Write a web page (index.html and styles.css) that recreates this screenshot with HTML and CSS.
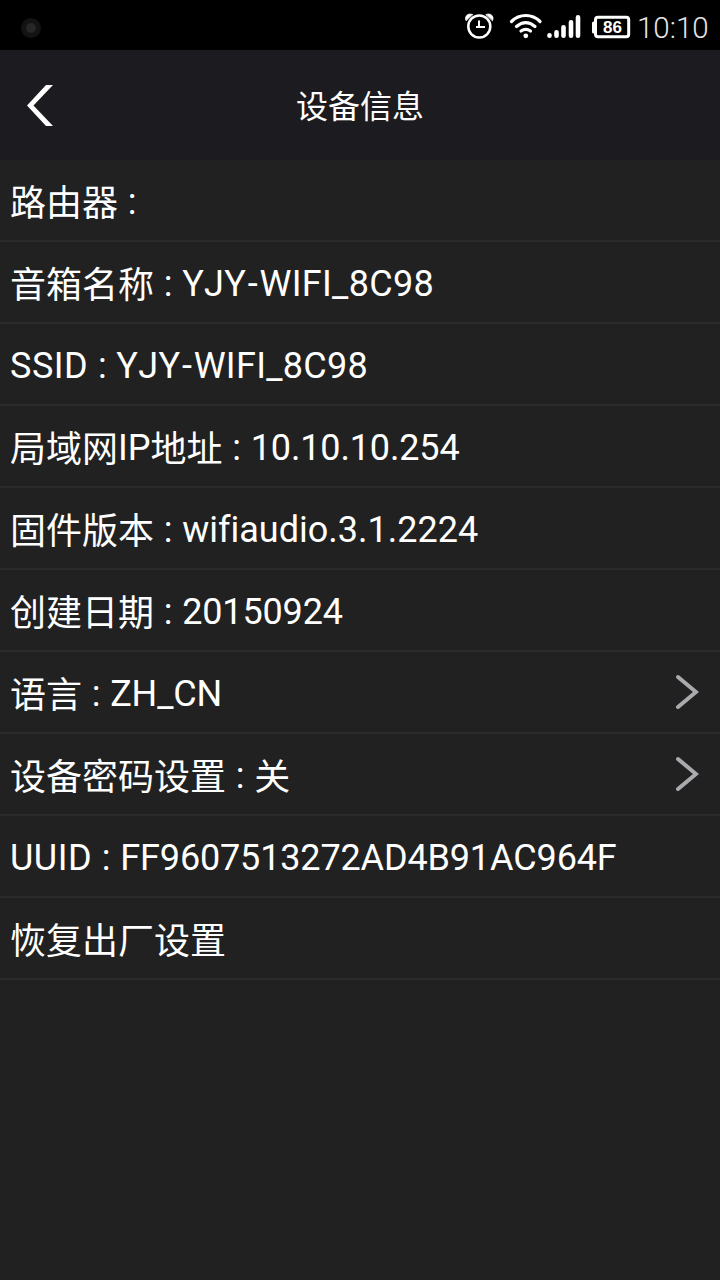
FILE: index.html
```html
<!DOCTYPE html>
<html lang="zh-CN">
<head>
    <meta charset="UTF-8">
    <meta name="viewport" content="width=device-width, initial-scale=1.0">
    <title>设备信息</title>
    <link rel="stylesheet" href="styles.css">
</head>
<body>
    <div class="status-bar">
        <span class="dot"></span>
        <svg class="icons" width="170" height="50" viewBox="464 0 170 50" fill="none" stroke="#fff" stroke-linecap="round">
            <!-- alarm -->
            <circle cx="479.300" cy="26.500" r="11" stroke-width="2.500"/>
            <path d="M479 20.500v6.500h6M476 27h3" stroke-width="2" stroke-linecap="butt"/>
            <path d="M466 20.500c-2-4 2-8 6.500-6zM492.600 20.500c2-4-2-8-6.500-6z" fill="#fff" stroke="#fff" stroke-width=".8"/>
            <!-- wifi -->
            <path d="M511.500 21.500c8-8 20.500-8 28.500 0M516.500 26.500c6-5 12.500-5 18.500 0M521 31c3.500-2.500 6-2.500 9.500 0" stroke-width="3.200"/>
            <circle cx="525.800" cy="35.800" r="2.400" fill="#fff" stroke="none"/>
            <!-- signal -->
            <path d="M549.500 35.300v.4M556.500 32.300v3.400M563.500 27.300v8.400M571 22.300v13.400M578 17.300v18.400" stroke-width="4.600"/>
            <!-- battery -->
            <rect x="595.500" y="17.300" width="33.200" height="19.400" rx="2.500" stroke-width="3"/>
            <path d="M593.500 23v9" stroke-width="3"/>
            <text class="level" x="612.500" y="32.500" text-anchor="middle" fill="#fff" stroke="none">86</text>
        </svg>
        <span class="time">10:10</span>
    </div>
    <header class="header">
        <svg class="back" width="28" height="42" viewBox="0 0 28 42"><path d="M19 0h7L6.500 20.500L26 41h-7L0 20.500z" fill="#fff"/></svg>
        <h1>设备信息</h1>
    </header>
    <ul class="info-list">
        <li><div><span class="label">路由器</span> :</div></li>
        <li><div><span class="label">音箱名称</span> : <span class="name">YJY<span class="dash">-</span>WIFI_8C98</span></div></li>
        <li><div><span class="key">SSID</span> : <span class="name">YJY<span class="dash">-</span>WIFI_8C98</span></div></li>
        <li><div><span class="label">局域网</span>IP<span class="label">地址</span> : <span class="number">10.10.10.254</span></div></li>
        <li><div><span class="label">固件版本</span> : wifiaudio.3.1.2224</div></li>
        <li><div><span class="label">创建日期</span> : <span class="number">20150924</span></div></li>
        <li><div><span class="label">语言</span> : <span class="number">ZH_CN</span></div><svg class="arrow" width="24" height="36" viewBox="0 0 24 36"><path d="M3 3L21 18L3 33"/></svg></li>
        <li><div><span class="label">设备密码设置</span> : <span class="label">关</span></div><svg class="arrow" width="24" height="36" viewBox="0 0 24 36"><path d="M3 3L21 18L3 33"/></svg></li>
        <li><div><span class="key">UUID</span> : <span class="number">FF9607513272AD4B91AC964F</span></div></li>
        <li><div><span class="label">恢复出厂设置</span></div></li>
    </ul>
</body>
</html>
```

FILE: styles.css
```css
body {
    margin: 0;
    min-height: 100vh;
    background-color: #212121;
    color: #fff;
    font-family: Roboto, "Noto Sans CJK SC", sans-serif;
}
.status-bar {
    display: flex;
    align-items: center;
    height: 50px;
    padding: 0 12px 0 21px;
    background-color: #000;
}
.dot {
    box-sizing: border-box;
    width: 20px;
    height: 20px;
    margin-top: 5px;
    border: 5px solid #131313;
    border-radius: 50%;
    background-color: #262626;
}
.icons {
    margin-left: auto;
}
.level {
    font: bold 17px "Liberation Sans", sans-serif;
}
.time {
    width: 71px;
    margin: 5px 0 0 3px;
    color: #e6e6e6;
    font-size: 29.5px;
    font-weight: 300;
}
.header {
    display: grid;
    grid-template-columns: 96px 1fr 96px;
    align-items: center;
    height: 110px;
    background-color: #1c1b20;
}
.header h1 {
    margin: 0 0 2px;
    font-size: 32px;
    font-weight: 400;
    text-align: center;
}
.back {
    margin: 2px 0 0 27px;
}
.info-list {
    margin: 0;
    padding: 0;
    list-style: none;
}
.info-list li {
    box-sizing: border-box;
    display: flex;
    align-items: center;
    justify-content: space-between;
    height: 82px;
    padding: 4px 21px 0 10px;
    border-bottom: 2px solid #2b2b2b;
    font-size: 36px;
    line-height: 56px;
    white-space: nowrap;
    font-kerning: none;
    font-variant-ligatures: none;
    word-spacing: 0.8px;
}
.label {
    line-height: 1;
    vertical-align: -2px;
}
.key {
    letter-spacing: 0.5px;
}
.name {
    letter-spacing: 0.3px;
}
.dash {
    display: inline-block;
    margin: 0 1.5px;
}
.number {
    letter-spacing: -0.15px;
}
.arrow {
    margin-bottom: 4px;
}
.arrow path {
    fill: none;
    stroke: #a9a9ae;
    stroke-width: 4;
    stroke-linecap: round;
}
```
